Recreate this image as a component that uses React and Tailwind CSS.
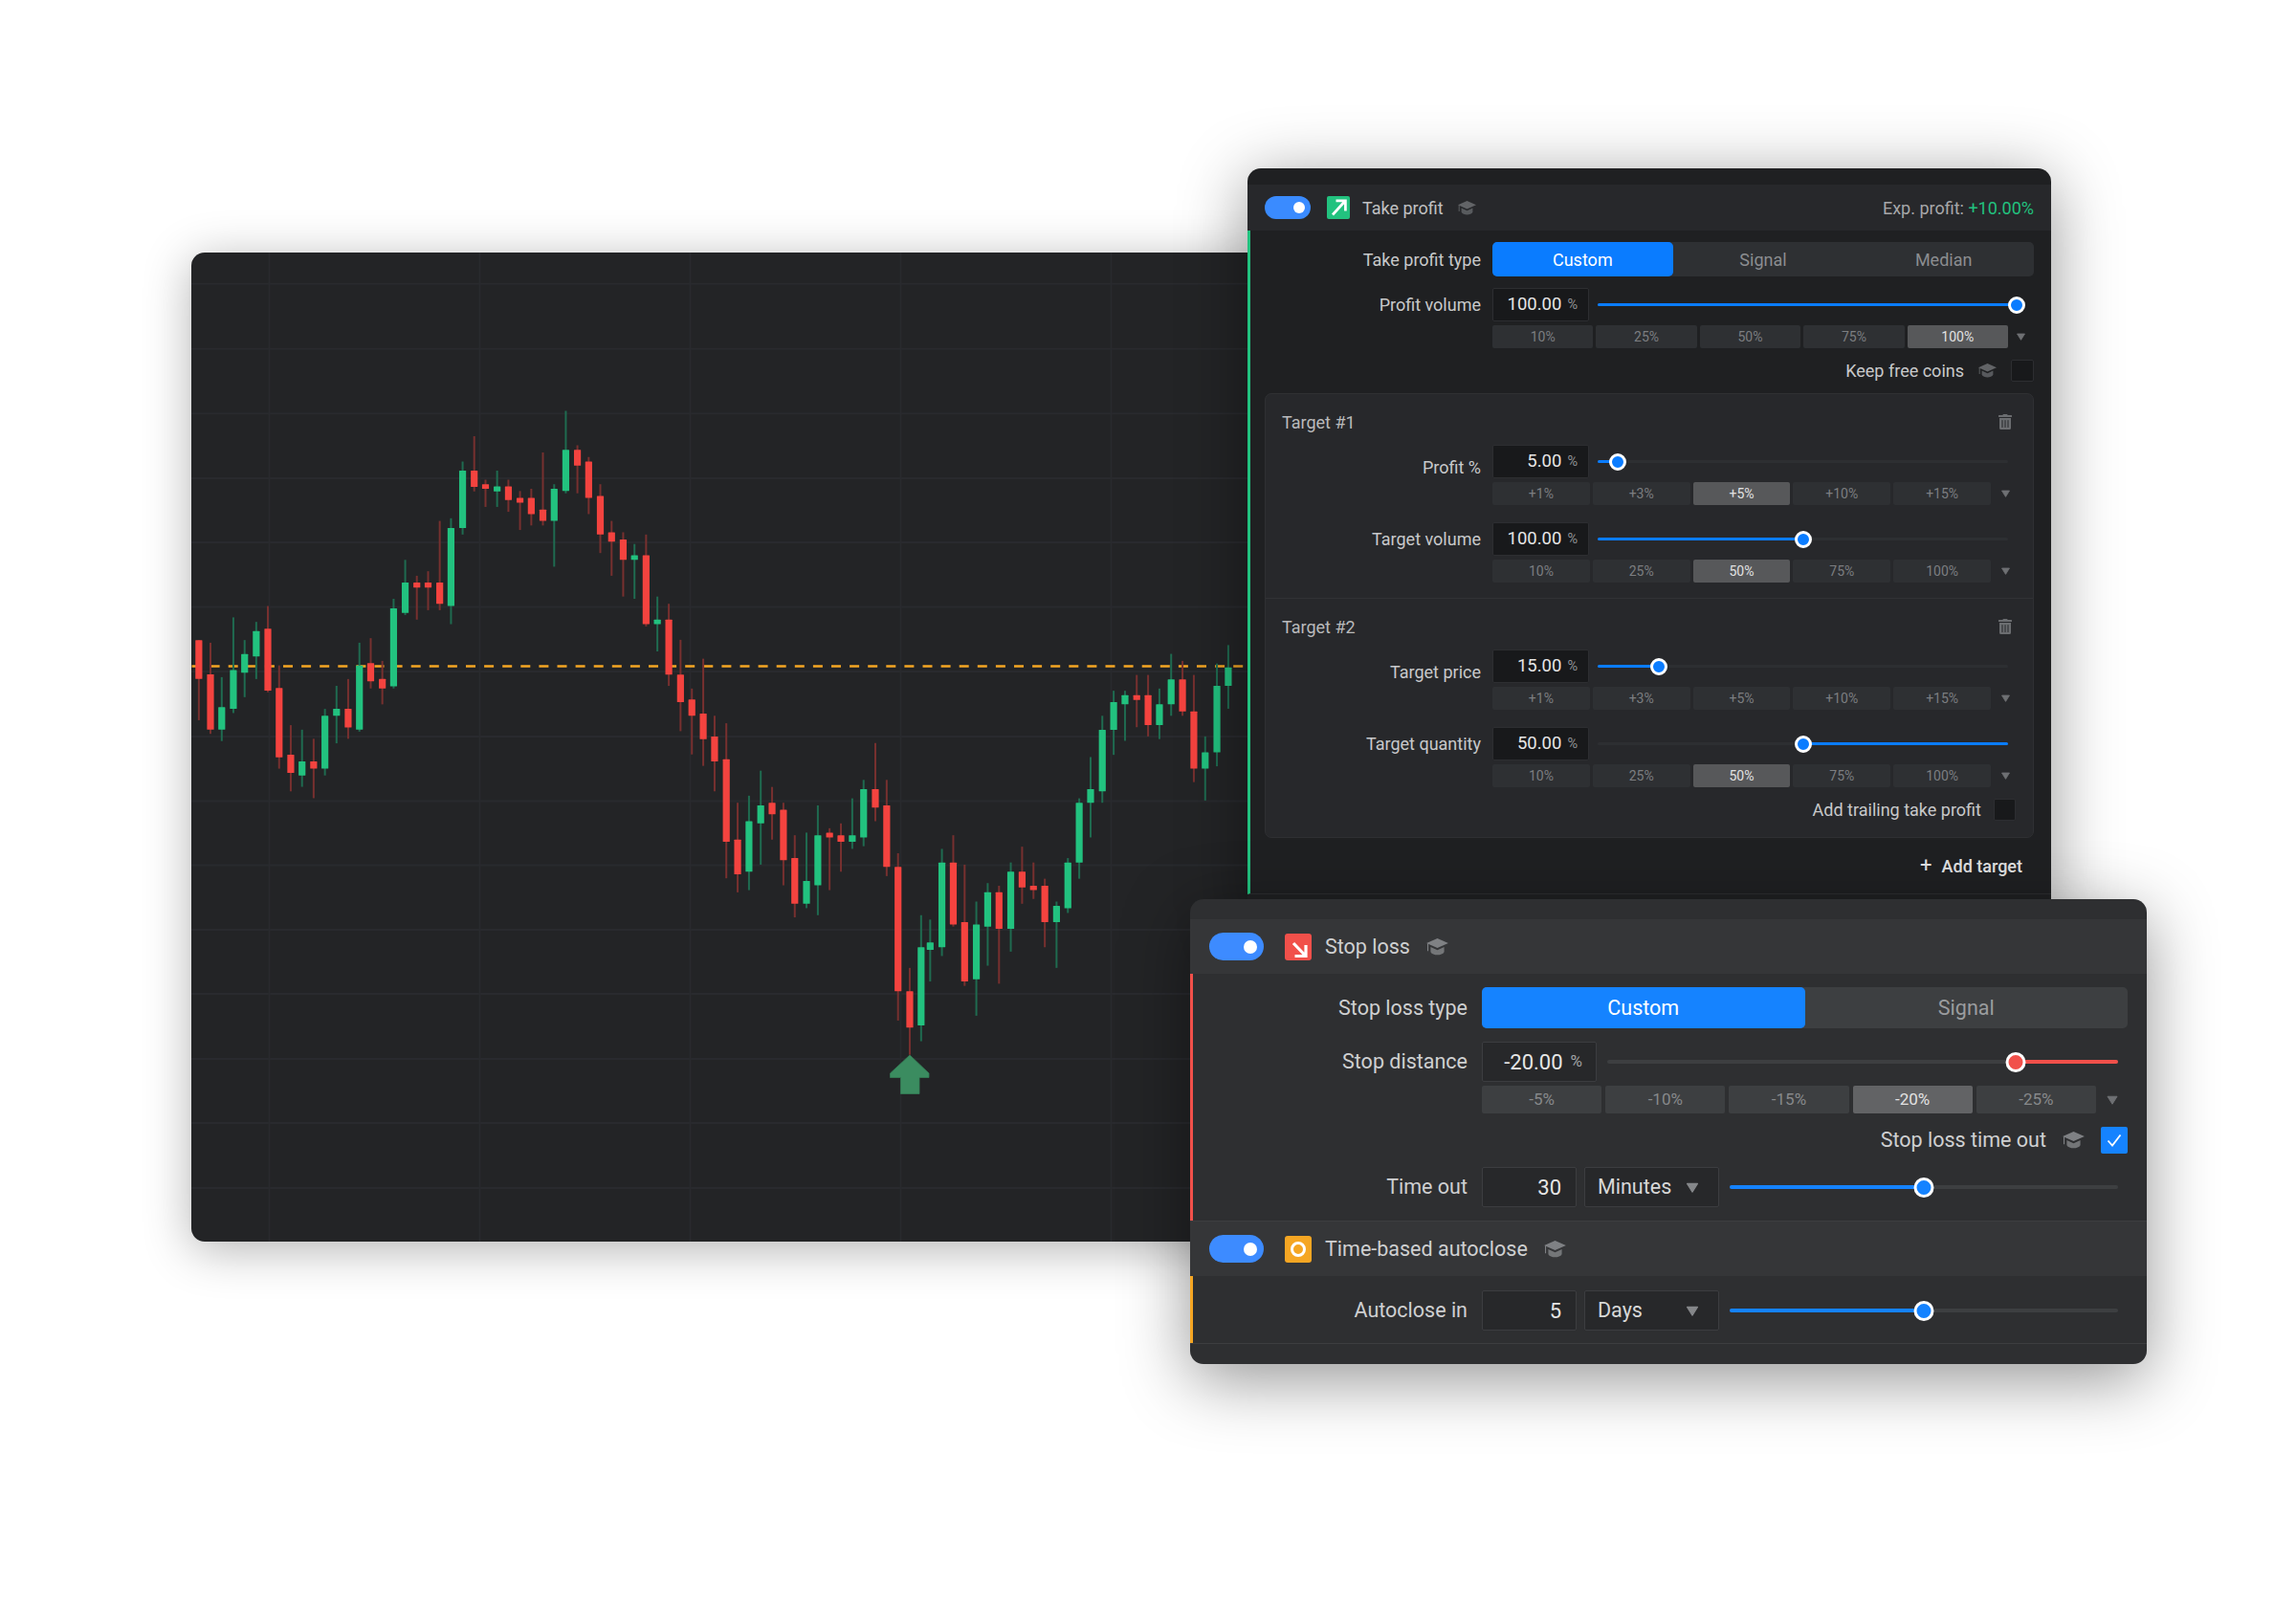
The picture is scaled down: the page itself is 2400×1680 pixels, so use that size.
import React from 'react';
import { FaTrashAlt } from 'react-icons/fa';

// [wickTop, bodyTop, bodyBottom, wickBottom] measured from the picture
const LEFT = [
  ['r',50,1060,1060,1163,1272],['r',84,1067,1151,1297,1308],['g',117,1158,1237,1297,1327],['g',151,1000,1139,1242,1253],
  ['g',184,1060,1097,1146,1211],['g',218,1012,1036,1103,1163],['r',252,970,1030,1194,1198],['r',285,1127,1187,1370,1400],
  ['r',319,1285,1363,1411,1460],['g',352,1297,1381,1418,1448],['r',386,1321,1381,1400,1478],['g',419,1242,1260,1400,1418],
  ['g',453,1181,1242,1260,1333],['r',487,1163,1242,1291,1321],['g',520,1067,1127,1297,1302],['r',553,1055,1121,1169,1188],
  ['r',587,1115,1163,1188,1230],['g',620,951,976,1182,1188],['g',654,848,908,988,994],['r',688,890,908,921,1006],
  ['r',721,878,908,921,981],['r',755,745,908,964,981],['g',788,738,764,970,1018],['g',822,588,612,764,781],
  ['r',856,521,612,655,667],['r',889,636,648,660,708],['g',923,612,654,667,708],['r',956,636,654,690,721],
  ['r',990,666,684,697,769],['r',1023,660,684,727,757],['r',1057,564,715,745,757],['g',1090,648,660,745,866],
  ['g',1124,454,557,666,672],['r',1158,545,557,599,672],['r',1191,576,588,684,727],['r',1225,648,679,781,830],
  ['r',1258,745,775,800,890],['r',1292,775,794,848,945],['g',1325,806,836,848,951],['r',1359,781,836,1018,1024],
  ['g',1392,945,1006,1018,1090],
];
const RIGHT = [
  ['r',23,68,104,229,255],['r',54,150,229,292,358],['r',84,261,286,323,411],['r',114,193,318,376,437],['r',144,323,370,427,495],
  ['r',175,340,422,610,693],['r',205,521,605,684,725],['g',235,505,563,678,720],['g',266,448,527,568,662],['r',296,485,521,547,605],
  ['r',326,521,537,652,709],['r',356,595,647,751,782],['g',387,589,699,751,761],['g',417,527,595,709,777],['r',448,579,589,600,720],
  ['r',478,568,595,610,678],['g',508,511,595,610,626],['g',538,469,490,600,620],['r',569,385,490,532,563],['r',599,469,527,667,688],
  ['r',629,636,667,950,1017],['r',660,897,950,1033,1095],['g',690,777,850,1028,1064],['g',714,787,839,856,928],['g',745,626,657,850,870],
  ['r',775,595,657,798,803],['r',805,662,793,928,938],['g',836,746,798,923,1006],['g',866,704,725,803,892],['r',896,710,725,808,933],
  ['g',927,657,678,808,860],['r',957,621,678,714,751],['r',987,657,710,720,740],['r',1017,694,710,793,850],['g',1048,746,756,793,897],
  ['g',1078,647,657,761,772],['g',1108,511,521,657,694],['g',1138,417,490,521,600],['g',1169,323,355,495,521],['g',1199,266,292,355,412],
  ['g',1229,266,276,297,380],['r',1260,230,276,287,349],['r',1290,230,276,344,370],['g',1320,261,297,344,376],['g',1351,182,240,297,323],
  ['r',1381,198,240,313,323],['r',1411,230,313,443,474],['g',1441,370,406,443,516],['g',1472,204,255,406,438],['g',1502,162,213,255,307],
];
const candles = [
  ...LEFT.map(([c, x, a, b, d, e]) => ({ c, x: 190 + x / 2.8, y: [a, b, d, e].map((v) => 250 + v / 2.529) })),
  ...RIGHT.map(([c, x, a, b, d, e]) => ({ c, x: 690 + x / 2.529, y: [a, b, d, e].map((v) => 600 + v / 2.178) })),
];
const H = [296.7, 364.7, 432.3, 500, 567, 634.5, 702, 770, 837.5, 904.5, 972, 1039, 1107, 1174, 1242];
const V = [281.5, 501.5, 721.5, 941.5, 1161.5];

function Chart() {
  return (
    <svg viewBox="200 264 1120 1034" className="block h-full w-full">
      {H.map((y) => <line key={y} x1="200" x2="1320" y1={y} y2={y} stroke="#292a2e" strokeWidth="1.8" />)}
      {V.map((x) => <line key={x} x1={x} x2={x} y1="264" y2="1298" stroke="#292a2e" strokeWidth="1.8" />)}
      <line x1="200.5" x2="1300" y1="696.6" y2="696.6" stroke="#f5a623" strokeWidth="2.5" strokeDasharray="10 9.1" />
      {candles.map((k, i) => (
        <g key={i}>
          <rect x={k.x - 1} y={k.y[0]} width="2" height={k.y[3] - k.y[0]} fill={k.c === 'g' ? '#1f6b50' : '#77302f'} />
          <rect x={k.x - 3.6} y={k.y[1]} width="7.2" height={k.y[2] - k.y[1]} rx="0.5" fill={k.c === 'g' ? '#22c27f' : '#f4433f'} />
        </g>
      ))}
      <path d="M951 1103 L971 1122 V1126.5 H961 V1143.5 H941.5 V1126.5 H930.5 V1122 Z" fill="#3b8c60" stroke="#337d55" strokeWidth="0.8" strokeLinejoin="round" />
    </svg>
  );
}

function Caret({ className }) {
  return (
    <svg viewBox="0 0 10 8" className={className} fill="currentColor">
      <path d="M1 1 H9 L5 7.4 Z" stroke="currentColor" strokeWidth="0.8" strokeLinejoin="round" />
    </svg>
  );
}

function GradCap({ className }) {
  return (
    <svg viewBox="0 0 19 15" className={className} fill="currentColor">
      <path d="M9.5 0 L19 4.2 L9.5 8.4 L0 4.2 Z" />
      <path d="M3.6 7.6 L9.5 10.2 L15.4 7.6 V11.8 C13.5 15.3 5.5 15.3 3.6 11.8 Z" opacity="0.85" />
      <path d="M1.2 4.4 V11" fill="none" stroke="currentColor" strokeWidth="0.9" />
    </svg>
  );
}

function Slider({ pct, reverse, fill = '#0a7cff', track = '#2d2f32', big }) {
  const thumb = big ? 'h-[21px] w-[21px] border-[3.5px]' : 'h-[18px] w-[18px] border-[3px]';
  const line = big ? 'h-[4px]' : 'h-[3px]';
  return (
    <div className="relative flex flex-1 items-center self-stretch">
      <div className={'w-full rounded-full ' + line} style={{ background: track }} />
      <div
        className={'absolute rounded-full ' + line}
        style={{ background: fill, left: reverse ? pct + '%' : 0, right: reverse ? 0 : 100 - pct + '%' }}
      />
      <div
        className={'absolute -translate-x-1/2 rounded-full border-white ' + thumb}
        style={{ left: pct + '%', background: fill }}
      />
    </div>
  );
}

function Presets({ items, active, big, caretBox }) {
  return (
    <div className={big ? 'mt-[4px] flex h-[29px] items-stretch' : 'mt-[4px] flex h-[24px] items-stretch'}>
      <div className={big ? 'grid flex-1 grid-cols-5 gap-[4px]' : 'grid flex-1 grid-cols-5 gap-[3px]'}>
        {items.map((t) => (
          <div
            key={t}
            className={
              'flex items-center justify-center rounded-[2px] ' +
              (big ? 'text-[17px] ' : 'text-[14px] ') +
              (t === active
                ? (big ? 'bg-[#626365] text-[#e2e2e2]' : 'bg-[#57585a] text-[#e2e2e2]')
                : (big ? 'bg-[#3d3f41] text-[#87898b]' : 'bg-[#2e3033] text-[#7c7e81]'))
            }
          >
            {t}
          </div>
        ))}
      </div>
      <div className={'flex items-center justify-center text-[#6e7073] ' + caretBox}>
        <Caret className={big ? 'h-[10px] w-[14px]' : 'h-[8px] w-[11px]'} />
      </div>
    </div>
  );
}

function Field({ value }) {
  return (
    <div className="flex h-[35px] w-[101px] shrink-0 items-center justify-end rounded-[2px] border border-[#2d2e31] bg-[#18191b] pr-[11px] text-[18.5px] text-[#e6e6e6]">
      <span>{value}</span>
      <span className="ml-[6px] text-[14.5px] text-[#909295]">%</span>
    </div>
  );
}

function SmallRow({ label, low, value, children }) {
  return (
    <div className="flex h-[35px] items-stretch">
      <div className={'flex w-[225px] shrink-0 items-center justify-end text-[18px] text-[#c8c9ca] ' + (low ? 'pt-[12px]' : '')}>{label}</div>
      <div className="ml-[12px]"><Field value={value} /></div>
      <div className="ml-[9px] flex flex-1 pr-[26px]">{children}</div>
    </div>
  );
}

function Section({ title, top, rows, children }) {
  return (
    <div className={'pt-[19px] ' + (top ? 'pb-[16px]' : 'border-t border-[#313235] pb-[17px]')}>
      <div className="flex h-[20px] items-center justify-between pl-[17px] pr-[22px] text-[18px] text-[#b9babb]">
        <span>{title}</span>
        <FaTrashAlt className="h-[16px] w-[14px] text-[#6b6d70]" />
      </div>
      <div className="mt-[14px] flex flex-col gap-[18px]">{rows}</div>
      {children}
    </div>
  );
}

const P1 = ['10%', '25%', '50%', '75%', '100%'];
const P2 = ['+1%', '+3%', '+5%', '+10%', '+15%'];

function TargetRow({ label, low, value, pct, reverse, items, active }) {
  return (
    <div>
      <SmallRow label={label} low={low} value={value}><Slider pct={pct} reverse={reverse} /></SmallRow>
      <div className="ml-[237px]"><Presets items={items} active={active} caretBox="w-[30px] pr-0 mr-[14px]" /></div>
    </div>
  );
}

function TakeProfit() {
  return (
    <div className="absolute left-[1304px] top-[176px] z-10 h-[790px] w-[840px] overflow-hidden rounded-[14px] bg-[#1f2022] font-[Roboto,sans-serif] shadow-[0_12px_70px_rgba(0,0,0,0.42)]">
      <div className="h-[17px]" />
      <div className="flex h-[48px] items-center bg-[#27282b] pl-[18px] pr-[18px]">
        <div className="flex h-[24px] w-[48px] items-center justify-end rounded-full bg-[#3a8bff] pr-[6px]">
          <div className="h-[12px] w-[12px] rounded-full bg-white" />
        </div>
        <div className="ml-[17px] flex h-[24px] w-[24px] items-center justify-center rounded-[2px] bg-[#22c27f]">
          <svg viewBox="0 0 24 24" className="h-[24px] w-[24px]" fill="none" stroke="#fff" strokeWidth="2.7">
            <path d="M9.5 4.8 H19.4 V15.5 M19.2 5 L6 19.5" />
          </svg>
        </div>
        <span className="ml-[13px] text-[18px] text-[#c0c1c2]">Take profit</span>
        <GradCap className="ml-[15px] h-[15px] w-[19px] text-[#626467]" />
        <span className="ml-auto text-[18px] text-[#a6a7a9]">Exp. profit: <span className="text-[#22c27f]">+10.00%</span></span>
      </div>
      <div className="border-b border-b-[#2c2d30] border-l-[3px] border-l-[#22c27f] pl-[15px] pr-[18px] pt-[12px]">
        <div className="flex h-[36px] items-stretch">
          <div className="flex w-[226px] shrink-0 items-center justify-end text-[18px] text-[#c8c9ca]">Take profit type</div>
          <div className="ml-[12px] grid flex-1 grid-cols-3 rounded-[5px] bg-[#2e3033] text-[18px] text-[#8b8d90]">
            <div className="flex items-center justify-center rounded-[5px] bg-[#0a7cff] text-white">Custom</div>
            <div className="flex items-center justify-center">Signal</div>
            <div className="flex items-center justify-center">Median</div>
          </div>
        </div>
        <div className="mt-[12px] flex h-[35px] items-stretch">
          <div className="flex w-[226px] shrink-0 items-center justify-end text-[18px] text-[#c8c9ca]">Profit volume</div>
          <div className="ml-[12px]"><Field value="100.00" /></div>
          <div className="ml-[9px] flex flex-1 pr-[18px]"><Slider pct={100} /></div>
        </div>
        <div className="ml-[238px]"><Presets items={P1} active="100%" caretBox="w-[27px]" /></div>
        <div className="mt-[12px] flex h-[23px] items-center justify-end text-[18px] text-[#c8c9ca]">
          <span>Keep free coins</span>
          <GradCap className="ml-[15px] h-[15px] w-[19px] text-[#626467]" />
          <div className="ml-[15px] h-[23px] w-[24px] rounded-[2px] border border-[#2d2e31] bg-[#18191b]" />
        </div>
        <div className="mt-[12px] rounded-[7px] border border-[#2f3033] bg-[#27282b]">
          <Section
            top
            title="Target #1"
            rows={
              <>
                <TargetRow label="Profit %" low value="5.00" pct={5} items={P2} active="+5%" />
                <TargetRow label="Target volume" value="100.00" pct={50} items={P1} active="50%" />
              </>
            }
          />
          <Section
            title="Target #2"
            rows={
              <>
                <TargetRow label="Target price" low value="15.00" pct={15} items={P2} />
                <TargetRow label="Target quantity" value="50.00" pct={50} reverse items={P1} active="50%" />
              </>
            }
          >
            <div className="mt-[12px] flex h-[23px] items-center justify-end pr-[18px] text-[18px] text-[#c8c9ca]">
              <span>Add trailing take profit</span>
              <div className="ml-[13px] h-[23px] w-[23px] rounded-[2px] border border-[#2d2e31] bg-[#18191b]" />
            </div>
          </Section>
        </div>
        <div className="mt-[19px] flex h-[20px] items-center justify-end pr-[12px] text-[18px] font-medium text-[#e2e2e2]">
          <span className="mr-[10px] text-[22px] font-normal leading-none">+</span>
          <span>Add target</span>
        </div>
        <div className="h-[19px]" />
      </div>
    </div>
  );
}

function Toggle() {
  return (
    <div className="flex h-[29px] w-[57px] items-center justify-end rounded-full bg-[#3d8bff] pr-[7px]">
      <div className="h-[14px] w-[14px] rounded-full bg-white" />
    </div>
  );
}

const Cap = () => <GradCap className="h-[18px] w-[23px] text-[#7f8184]" />;
const Label = ({ children }) => (
  <div className="flex w-[287px] shrink-0 items-center justify-end pt-[1px] text-[21.5px] text-[#cfd0d1]">{children}</div>
);
const Box = ({ children }) => (
  <div className="flex h-[42px] w-[99px] shrink-0 items-center justify-end rounded-[2px] border border-[#3c3d40] bg-[#27282a] pr-[15px] text-[22px] text-[#e6e6e6]">{children}</div>
);
const Drop = ({ children }) => (
  <div className="ml-[8px] flex h-[42px] w-[141px] shrink-0 items-center justify-between rounded-[2px] border border-[#3c3d40] bg-[#27282a] pl-[13px] pr-[20px] pt-[1px] text-[21.5px] text-[#d8d8d8]">
    <span>{children}</span>
    <Caret className="h-[11px] w-[14px] text-[#85878a]" />
  </div>
);

function StopLoss() {
  return (
    <div className="absolute left-[1244px] top-[940px] z-20 flex h-[486px] w-[1000px] flex-col overflow-hidden rounded-[14px] bg-[#2e2f31] font-[Roboto,sans-serif] shadow-[0_16px_70px_rgba(0,0,0,0.42)]">
      <div className="h-[21px] shrink-0" />
      <div className="flex h-[57px] shrink-0 items-center bg-[#353638] pl-[20px]">
        <Toggle />
        <div className="ml-[22px] h-[28px] w-[28px] rounded-[3px] bg-[#f1504a]">
          <svg viewBox="0 0 28 28" className="h-[28px] w-[28px]" fill="none" stroke="#fff" strokeWidth="3.2">
            <path d="M9 10 L21.5 23 M10.5 23.5 H22 V12" />
          </svg>
        </div>
        <span className="ml-[14px] pt-[1px] text-[21.5px] text-[#cfd0d1]">Stop loss</span>
        <div className="ml-[17px]"><Cap /></div>
      </div>
      <div className="shrink-0 border-l-[3px] border-l-[#f1504a] pb-[14px] pr-[20px] pt-[14px]">
        <div className="flex h-[43px] items-stretch">
          <Label>Stop loss type</Label>
          <div className="ml-[15px] grid flex-1 grid-cols-2 rounded-[5px] bg-[#3d3f41] text-[21.5px] text-[#9a9c9e]">
            <div className="flex items-center justify-center rounded-[5px] bg-[#1583ff] pt-[1px] text-white">Custom</div>
            <div className="flex items-center justify-center pt-[1px]">Signal</div>
          </div>
        </div>
        <div className="mt-[14px] flex h-[42px] items-stretch">
          <Label>Stop distance</Label>
          <div className="ml-[15px] flex h-[42px] w-[120px] shrink-0 items-center justify-end rounded-[2px] border border-[#3c3d40] bg-[#27282a] pr-[14px] text-[22px] text-[#e6e6e6]">
            <span>-20.00</span>
            <span className="ml-[8px] text-[17px] text-[#a0a2a4]">%</span>
          </div>
          <div className="ml-[11px] flex flex-1 pr-[10px]">
            <Slider big pct={80} reverse fill="#f1504a" track="#3d3f41" />
          </div>
        </div>
        <div className="ml-[302px]">
          <Presets big items={['-5%', '-10%', '-15%', '-20%', '-25%']} active="-20%" caretBox="w-[33px]" />
        </div>
        <div className="mt-[14px] flex h-[28px] items-center justify-end text-[21.5px] text-[#cfd0d1]">
          <span>Stop loss time out</span>
          <div className="ml-[17px]"><Cap /></div>
          <div className="ml-[17px] flex h-[28px] w-[28px] items-center justify-center rounded-[2px] bg-[#1583ff]">
            <svg viewBox="0 0 28 28" className="h-[28px] w-[28px]" fill="none" stroke="#fff" strokeWidth="1.8">
              <path d="M7.5 14.5 L12 19.5 L20.5 8.5" />
            </svg>
          </div>
        </div>
        <div className="mt-[14px] flex h-[42px] items-stretch">
          <Label>Time out</Label>
          <div className="ml-[15px] flex">
            <Box>30</Box>
            <Drop>Minutes</Drop>
          </div>
          <div className="ml-[11px] flex flex-1 pr-[10px]"><Slider big pct={50} fill="#1583ff" track="#3d3f41" /></div>
        </div>
      </div>
      <div className="flex h-[58px] shrink-0 items-center border-t border-[#3d3e40] bg-[#353638] pl-[20px]">
        <Toggle />
        <div className="ml-[22px] flex h-[28px] w-[28px] items-center justify-center rounded-[3px] bg-[#f5a623]">
          <div className="h-[16px] w-[16px] rounded-full border-[3px] border-white" />
        </div>
        <span className="ml-[14px] pt-[1px] text-[21.5px] text-[#cfd0d1]">Time-based autoclose</span>
        <div className="ml-[17px]"><Cap /></div>
      </div>
      <div className="shrink-0 border-l-[3px] border-l-[#f5a623] pb-[13px] pr-[20px] pt-[15px]">
        <div className="flex h-[42px] items-stretch">
          <Label>Autoclose in</Label>
          <div className="ml-[15px] flex">
            <Box>5</Box>
            <Drop>Days</Drop>
          </div>
          <div className="ml-[11px] flex flex-1 pr-[10px]"><Slider big pct={50} fill="#1583ff" track="#3d3f41" /></div>
        </div>
      </div>
      <div className="flex-1 border-t border-[#3d3e40]" />
    </div>
  );
}

export default function App() {
  return (
    <div className="relative h-[1680px] w-[2400px] overflow-hidden bg-white">
      <div className="absolute left-[200px] top-[264px] h-[1034px] w-[1120px] overflow-hidden rounded-[14px] bg-[#232426] shadow-[0_8px_50px_rgba(0,0,0,0.3)]">
        <Chart />
      </div>
      <TakeProfit />
      <StopLoss />
    </div>
  );
}
